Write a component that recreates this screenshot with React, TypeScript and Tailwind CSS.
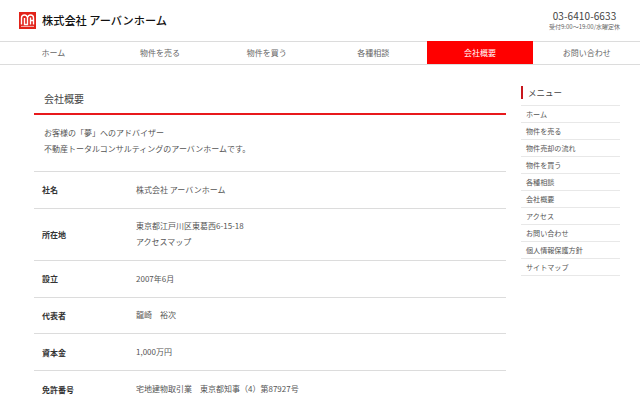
const navItems = ["ホーム", "物件を売る", "物件を買う", "各種相談", "会社概要", "お問い合わせ"];

const menuItems = [
  "ホーム",
  "物件を売る",
  "物件売却の流れ",
  "物件を買う",
  "各種相談",
  "会社概要",
  "アクセス",
  "お問い合わせ",
  "個人情報保護方針",
  "サイトマップ",
];

function Logo() {
  return (
    <svg width="17" height="17" viewBox="0 0 17 17" className="shrink-0">
      <rect width="17" height="17" fill="#e2231a" />
      <path
        d="M2.5 12.5V6C2.5 4 4 3 5.5 3S8 4 8.5 5.5C9 4 10 3 11.5 3S14.5 4 14.5 6V12.5M5.5 6V12.5H8.5V6M11.5 5.5V12.5M11.5 8.5H14.5"
        fill="none"
        stroke="#fff"
        strokeWidth="1.4"
      />
      <path d="M2 14.4H15" stroke="#fff" strokeWidth="0.7" />
    </svg>
  );
}

function Row({ label, children, tall }: { label: string; children: React.ReactNode; tall?: boolean }) {
  return (
    <div className={`flex items-center border-b border-[#dcdcdc] ${tall ? "h-[52px]" : "h-[36.8px]"}`}>
      <div className="w-[102px] pl-[8px] pt-[1px] text-[8px] font-bold text-[#333]">{label}</div>
      <div className="text-[8px] leading-[16px] text-[#555]">{children}</div>
    </div>
  );
}

export default function App() {
  return (
    <div className="h-[400px] w-[640px] overflow-hidden bg-white font-['Noto_Sans_CJK_JP','Noto_Sans',sans-serif]">
      <header className="flex h-[41px] items-center justify-between pl-[19px] pr-[20px]">
        <div className="flex items-center gap-[6px]">
          <Logo />
          <span className="text-[11.2px] font-medium text-[#111]">株式会社 アーバンホーム</span>
        </div>
        <div className="flex flex-col items-center">
          <span className="text-[10px] leading-[13px] tracking-[0.1px] text-[#444]">03-6410-6633</span>
          <span className="text-[6px] leading-[10px] text-[#666]">受付9:00〜19:00/水曜定休</span>
        </div>
      </header>

      <nav className="grid h-[24px] grid-cols-6 border-y border-[#dcdcdc]">
        {navItems.map((item) => (
          <div
            key={item}
            className={`flex items-center justify-center text-[8px] ${
              item === "会社概要" ? "-mt-px bg-[#ff0000] text-white" : "text-[#666]"
            }`}
          >
            {item}
          </div>
        ))}
      </nav>

      <div className="flex gap-[15px] pl-[34px] pr-[20px] pt-[19px]">
        <main className="w-[472px]">
          <h2 className="flex h-[31px] items-center border-b-2 border-[#e8191c] pb-[1px] pl-[10px] text-[10px] text-[#444]">
            会社概要
          </h2>
          <div className="border-b border-[#dcdcdc] pb-[14px] pl-[10px] pt-[10px] text-[8px] leading-[16px] text-[#555]">
            <p>お客様の「夢」へのアドバイザー</p>
            <p>不動産トータルコンサルティングのアーバンホームです。</p>
          </div>
          <Row label="社名">株式会社 アーバンホーム</Row>
          <Row label="所在地" tall>
            <p>東京都江戸川区東葛西6-15-18</p>
            <p>アクセスマップ</p>
          </Row>
          <Row label="設立">2007年6月</Row>
          <Row label="代表者">龍崎　裕次</Row>
          <Row label="資本金">1,000万円</Row>
          <Row label="免許番号">宅地建物取引業　東京都知事（4）第87927号</Row>
        </main>

        <aside className="w-[99px]">
          <h3 className="mt-[2px] mb-[6px] border-l-2 border-[#c8161d] pl-[5px] text-[8.5px] leading-[13px] text-[#444]">
            メニュー
          </h3>
          <ul className="border-t border-[#e8e8e8]">
            {menuItems.map((item) => (
              <li
                key={item}
                className="flex h-[17px] items-center border-b border-[#e8e8e8] pl-[5px] text-[7.1px] text-[#555]"
              >
                {item}
              </li>
            ))}
          </ul>
        </aside>
      </div>
    </div>
  );
}
